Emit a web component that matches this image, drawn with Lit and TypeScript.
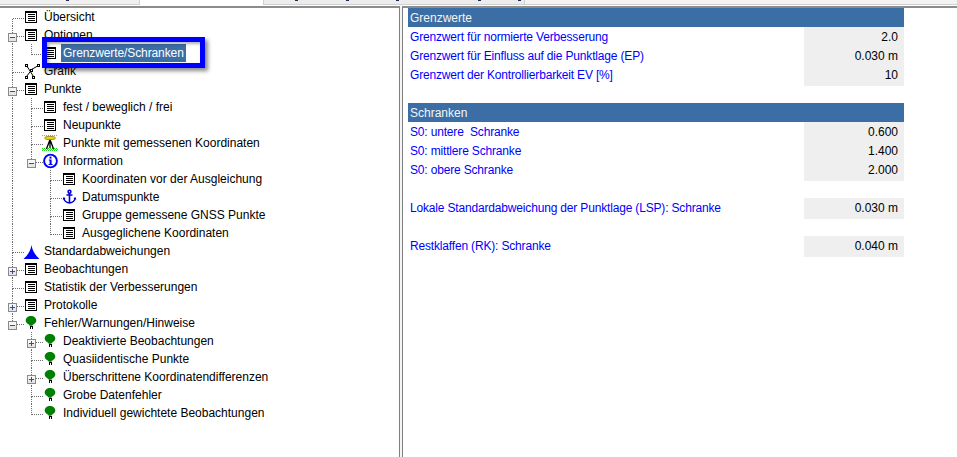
import { LitElement, html, css, svg } from "lit";
import { customElement } from "lit/decorators.js";

type Guide = "" | "v" | "t" | "l" | "r" | "tm" | "tp" | "lm" | "rm";
type Row = { g: Guide[]; icon: string; text: string; sel?: boolean };

const guideSvg = (g: Guide) => {
  const line = "#6e6e6e";
  const x = 9.5;
  const y = 10.5;
  const up = g === "v" || g === "t" || g === "l" || g === "tm" || g === "tp" || g === "lm" || g === "rm";
  const down = g === "v" || g === "t" || g === "r" || g === "tm" || g === "tp" || g === "rm";
  const stub = g !== "v" && g !== "";
  const box = g === "tm" || g === "tp" || g === "lm" || g === "rm";
  const plus = g === "tp";
  return html`<svg class="cell" width="19" height="18" viewBox="0 0 19 18" shape-rendering="crispEdges">
    ${up ? svg`<line x1=${x} x2=${x} y1="0" y2=${y} stroke=${line} stroke-dasharray="1 1"/>` : ""}
    ${down ? svg`<line x1=${x} x2=${x} y1=${y} y2="18" stroke=${line} stroke-dasharray="1 1"/>` : ""}
    ${stub ? svg`<line x1=${x} x2="21" y1=${y} y2=${y} stroke=${line} stroke-dasharray="1 1"/>` : ""}
    ${box
      ? svg`<rect x="5.5" y="7.5" width="8" height="8" fill="#e6e6e6" stroke="#8a8a8a"/>
            <rect x="6" y="8" width="7" height="3" fill="#f6f6f6"/>
            <line x1="7" x2="12" y1="11.5" y2="11.5" stroke="#3a4a9a"/>
            ${plus ? svg`<line x1="9.5" x2="9.5" y1="9" y2="14" stroke="#3a4a9a"/>` : ""}`
      : ""}
  </svg>`;
};

const icons: Record<string, unknown> = {
  doc: svg`<g shape-rendering="crispEdges">
    <rect x="3.5" y="3.5" width="11" height="11" fill="#fff" stroke="#000"/>
    <rect x="3" y="3" width="12" height="2" fill="#000"/>
    <path d="M6 6.500h7M6 8.500h7M6 10.500h7M6 12.500h7" stroke="#000"/></g>`,
  graph: svg`<path d="M4.500 3.500L11.500 14.500M16.500 3.500L9.500 7.500M9.500 8L4.500 14.500" stroke="#000" fill="none"/>
    <g fill="#fff" stroke="#000" shape-rendering="crispEdges">
    <rect x="3.500" y="2.500" width="2" height="2"/><rect x="15.500" y="2.500" width="2" height="2"/>
    <rect x="8.500" y="7.500" width="2" height="2"/><rect x="3.500" y="14.500" width="2" height="2"/><rect x="10.500" y="14.500" width="2" height="2"/></g>`,
  survey: svg`<path d="M1 1.500h16" stroke="#00d8ff" stroke-dasharray="1 1" shape-rendering="crispEdges"/>
    <path d="M1 14.500h16M2 15.500h15M1 16.500h16" stroke="#1fdc1f" stroke-dasharray="1 1" shape-rendering="crispEdges"/>
    <path d="M9 5V14M9 5.500L5.500 15M9 5.500L12.500 15" stroke="#000" stroke-width="1.300" fill="none"/>
    <ellipse cx="9" cy="4" rx="5.500" ry="1.700" fill="#ecd800" stroke="#7a7000" stroke-width=".7"/>`,
  info: svg`<circle cx="9.500" cy="9" r="6.400" fill="#fff" stroke="#0000ff" stroke-width="1.900"/>
    <rect x="8.500" y="4.600" width="2" height="2" fill="#0000ff"/>
    <path d="M7.800 7.400h2.800v4.500h1v1.100H7.600v-1.100h1V8.500h-.8z" fill="#0000ff"/>`,
  anchor: svg`<g fill="none" stroke="#0000d8" stroke-width="1.600">
    <circle cx="9.500" cy="3.700" r="1.400"/><path d="M9.500 5v10M6.500 7h6"/>
    <path d="M3.800 10c.4 3.200 3 4.600 5.700 5 2.700-.4 5.300-1.800 5.700-5"/></g>
    <path d="M2.600 11.500l1.200-2.800 1.800 2.400zM16.400 11.500l-1.200-2.800-1.800 2.400z" fill="#0000d8"/>`,
  tri: svg`<path d="M9.500 3C10.500 9 13 13 17.500 17H1.500C6 13 8.500 9 9.500 3Z" fill="#0000ff"/>`,
  pin: svg`<path d="M9 2c3 0 5.300 1.900 5.300 4.400 0 2.100-1.900 3.200-3.400 4.300l-.6 1.100H7.700l-.6-1.100C5.600 9.600 3.700 8.500 3.700 6.400 3.700 3.900 6 2 9 2z" fill="#008000"/>
    <path d="M7.500 11.500h3v3.700h-3z" fill="#000" shape-rendering="crispEdges"/><path d="M8.500 12.500h1v2h-1z" fill="#fff" shape-rendering="crispEdges"/>`,
};

const rows: Row[] = [
  { g: ["r"], icon: "doc", text: "Übersicht" },
  { g: ["tm"], icon: "doc", text: "Optionen" },
  { g: ["v", "l"], icon: "doc", text: "Grenzwerte/Schranken", sel: true },
  { g: ["t"], icon: "graph", text: "Grafik" },
  { g: ["tm"], icon: "doc", text: "Punkte" },
  { g: ["v", "t"], icon: "doc", text: "fest / beweglich / frei" },
  { g: ["v", "t"], icon: "doc", text: "Neupunkte" },
  { g: ["v", "t"], icon: "survey", text: "Punkte mit gemessenen Koordinaten" },
  { g: ["v", "lm"], icon: "info", text: "Information" },
  { g: ["v", "", "t"], icon: "doc", text: "Koordinaten vor der Ausgleichung" },
  { g: ["v", "", "t"], icon: "anchor", text: "Datumspunkte" },
  { g: ["v", "", "t"], icon: "doc", text: "Gruppe gemessene GNSS Punkte" },
  { g: ["v", "", "l"], icon: "doc", text: "Ausgeglichene Koordinaten" },
  { g: ["t"], icon: "tri", text: "Standardabweichungen" },
  { g: ["tp"], icon: "doc", text: "Beobachtungen" },
  { g: ["t"], icon: "doc", text: "Statistik der Verbesserungen" },
  { g: ["tp"], icon: "doc", text: "Protokolle" },
  { g: ["lm"], icon: "pin", text: "Fehler/Warnungen/Hinweise" },
  { g: ["", "tp"], icon: "pin", text: "Deaktivierte Beobachtungen" },
  { g: ["", "t"], icon: "pin", text: "Quasiidentische Punkte" },
  { g: ["", "tp"], icon: "pin", text: "Überschrittene Koordinatendifferenzen" },
  { g: ["", "t"], icon: "pin", text: "Grobe Datenfehler" },
  { g: ["", "l"], icon: "pin", text: "Individuell gewichtete Beobachtungen" },
];

type Item = { h?: string; label?: string; value?: string };
const table: Item[] = [
  { h: "Grenzwerte" },
  { label: "Grenzwert für normierte Verbesserung", value: "2.0" },
  { label: "Grenzwert für Einfluss auf die Punktlage (EP)", value: "0.030 m" },
  { label: "Grenzwert der Kontrollierbarkeit EV [%]", value: "10" },
  {},
  { h: "Schranken" },
  { label: "S0: untere  Schranke", value: "0.600" },
  { label: "S0: mittlere Schranke", value: "1.400" },
  { label: "S0: obere Schranke", value: "2.000" },
  {},
  { label: "Lokale Standardabweichung der Punktlage (LSP): Schranke", value: "0.030 m" },
  {},
  { label: "Restklaffen (RK): Schranke", value: "0.040 m" },
];

const marks = [66, 295, 346, 396, 478, 518];

@customElement("app-root")
export class AppRoot extends LitElement {
  static styles = css`
    :host {
      display: block;
      width: 957px;
      height: 457px;
      overflow: hidden;
      position: relative;
      background: #fff;
      font-family: "Liberation Sans", Arial, sans-serif;
      font-size: 12px;
      color: #000;
    }
    .strip { display: flex; height: 5px; background: #fff; }
    .strip .a { width: 140px; background: #f0f0f0; border-bottom: 1px solid #d0d0d0; border-right: 1px solid #d0d0d0; box-sizing: border-box; }
    .strip .gap { width: 123px; }
    .strip .b { width: 262px; background: #ececec; border: 1px solid #d0d0d0; border-top: 0; box-sizing: border-box; }
    .strip .c { flex: 1; background: #f3f3f3; border-bottom: 1px solid #d0d0d0; }
    .mark { position: absolute; top: 0; width: 3px; height: 1px; background: #1c2a50; }
    .main { display: grid; grid-template-columns: 400px 2px 1fr; height: 452px; }
    .left { border-top: 2px solid #8c8c8c; border-right: 1px solid #808080; box-sizing: border-box; margin-top: 1px; background: #fff; }
    .split { background: #f4f4f4; }
    .right { border-top: 2px solid #8c8c8c; border-left: 1px solid #808080; box-sizing: border-box; margin-top: 1px; padding: 0 53px 0 5px; background: #fff; }
    .tree { padding: 0 0 0 3px; }
    .row { display: flex; align-items: center; height: 18px; white-space: pre; }
    .cell { flex: none; display: block; overflow: visible; }
    .label { margin-left: 1px; padding: 0 2px; line-height: 18px; }
    .label.sel { background: #3b6ea5; color: #fff; letter-spacing: -0.1px; }
    .table { display: flex; flex-direction: column; }
    .t { display: grid; grid-template-columns: 1fr 100px; height: 19px; line-height: 21px; white-space: pre; }
    .t .lab { color: #0000ff; padding-left: 2px; letter-spacing: -0.17px; }
    .t .val { background: #efefef; text-align: right; padding-right: 6px; }
    .head { height: 19px; line-height: 21px; background: #3b6ea5; color: #f4f4f4; padding-left: 2px; }
    .gap19 { height: 19px; }
    .frame {
      position: absolute;
      left: 42px; top: 37px; width: 163px; height: 31px;
      box-sizing: border-box;
      border: 5px solid #0000ff;
      box-shadow: 3px 3px 4px rgba(0,0,0,.45), inset 2px 2px 3px rgba(0,0,0,.3);
    }
  `;

  render() {
    return html`
      <div class="strip"><div class="a"></div><div class="gap"></div><div class="b"></div><div class="c"></div></div>
      ${marks.map((x) => html`<i class="mark" style="left:${x}px"></i>`)}
      <div class="main">
        <div class="left">
          <div class="tree">
            ${rows.map(
              (r) => html`<div class="row">
                ${r.g.map((g) => guideSvg(g))}
                <svg class="cell" width="19" height="18" viewBox="0 0 19 18">${icons[r.icon]}</svg>
                <span class="label ${r.sel ? "sel" : ""}">${r.text}</span>
              </div>`
            )}
          </div>
        </div>
        <div class="split"></div>
        <div class="right">
          <div class="table">
            ${table.map((t) =>
              t.h
                ? html`<div class="head">${t.h}</div>`
                : t.label
                ? html`<div class="t"><span class="lab">${t.label}</span><span class="val">${t.value}</span></div>`
                : html`<div class="gap19"></div>`
            )}
          </div>
        </div>
      </div>
      <div class="frame"></div>
    `;
  }
}
